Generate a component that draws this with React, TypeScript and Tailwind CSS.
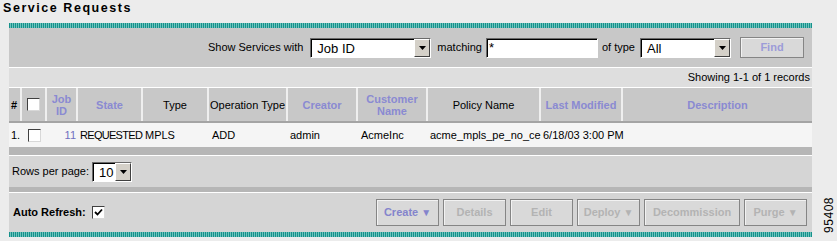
import React from "react";

const teal =
  "h-[5px] bg-[repeating-linear-gradient(90deg,#16918b_0px,#16918b_1px,#6fc3bd_1px,#6fc3bd_2px)]";

function Checkbox({ checked = false }: { checked?: boolean }) {
  return (
    <span className="inline-flex w-[13px] h-[13px] bg-white border border-t-[#404040] border-l-[#404040] border-b-[#d8d8d8] border-r-[#d8d8d8] items-center justify-center">
      {checked && (
        <svg width="9" height="9" viewBox="0 0 9 9">
          <path d="M1 4 L3.5 6.5 L8 1.5" stroke="#000" strokeWidth="1.8" fill="none" />
        </svg>
      )}
    </span>
  );
}

function Select({ value, width }: { value: string; width: string }) {
  return (
    <div
      className={`${width} h-[20px] bg-white flex items-stretch border border-t-[#6a6a6a] border-l-[#6a6a6a] border-b-white border-r-white`}
    >
      <div className="flex-1 flex items-center pl-[5px] text-[13px] leading-none border-t border-l border-t-black border-l-black">
        {value}
      </div>
      <div className="w-[16px] bg-[#d4d0c8] flex items-center justify-center border-t border-l border-t-white border-l-white border-b border-r border-b-[#404040] border-r-[#404040]">
        <svg width="7" height="4" viewBox="0 0 7 4">
          <path d="M0 0 H7 L3.5 4 Z" fill="#000" />
        </svg>
      </div>
    </div>
  );
}

function Btn({ label, width, active = false, arrow = false }: { label: string; width: string; active?: boolean; arrow?: boolean }) {
  return (
    <div
      className={`${width} h-[27px] bg-[#d9d9d9] border border-[#858585] shadow-[inset_1px_1px_0_#f2f2f2] flex items-center justify-center font-bold text-[11px] ${
        active ? "text-[#8484cc]" : "text-[#b3b3b3]"
      }`}
    >
      {label}
      {arrow && <span className="ml-[3px] text-[10px]">▼</span>}
    </div>
  );
}

const cols = [
  { w: "w-[13px]", label: "#", sort: false, align: "justify-start pl-[2px]" },
  { w: "w-[25px]", label: "cb", sort: false },
  { w: "w-[31px]", label: "Job\nID", sort: true },
  { w: "w-[65px]", label: "State", sort: true },
  { w: "w-[66px]", label: "Type", sort: false },
  { w: "w-[79px]", label: "Operation Type", sort: false },
  { w: "w-[70px]", label: "Creator", sort: true },
  { w: "w-[70px]", label: "Customer\nName", sort: true },
  { w: "w-[113px]", label: "Policy Name", sort: false },
  { w: "w-[82px]", label: "Last Modified", sort: true },
  { w: "flex-1", label: "Description", sort: true },
];

export default function App() {
  return (
    <div className="w-[837px] h-[241px] bg-[#ececec] flex font-['Liberation_Sans',Arial,sans-serif] text-[11px] text-black overflow-hidden">
      <div className="w-[812px] flex flex-col">
        <div className="h-[23px] pl-[3px] pt-[1px] text-[12.5px] font-bold tracking-[1.55px] leading-[14px]">
          Service Requests
        </div>
        <div className="ml-[9px] flex flex-col">
          <div className={teal} />
          <div className="h-[40px] bg-[#c8c8c8] flex items-center justify-end pr-[8px] border-b border-white">
            <span className="mr-[7px]">Show Services with</span>
            <Select value="Job ID" width="w-[121px]" />
            <span className="ml-[6px] mr-[4px]">matching</span>
            <div className="w-[112px] h-[20px] bg-white border border-t-[#6a6a6a] border-l-[#6a6a6a] border-b-white border-r-white">
              <div className="h-full border-t border-l border-t-black border-l-black pl-[1px] text-[13px] leading-[16px]">
                *
              </div>
            </div>
            <span className="ml-[4px] mr-[5px]">of type</span>
            <Select value="All" width="w-[91px]" />
            <div className="ml-[9px] w-[64px] h-[21px] bg-[#d9d9d9] border border-[#858585] shadow-[inset_1px_1px_0_#f2f2f2] flex items-center justify-center font-bold text-[#9c9cd8]">
              Find
            </div>
          </div>
          <div className="h-[19px] bg-[#dedede] flex items-center justify-end pr-[2px]">
            Showing 1-1 of 1 records
          </div>
          <div className="flex h-[36px] bg-[#c8c8c8] border-t border-white border-b-2 border-b-[#a4a4a4]">
            {cols.map((c, i) => (
              <div
                key={i}
                className={`${c.w} flex items-center ${c.align ?? "justify-center"} text-center leading-[12px] whitespace-pre-line ${
                  i < cols.length - 1 ? "border-r-2 border-[#efefef]" : ""
                } ${c.sort ? "font-bold text-[#8a8ad2]" : i === 0 ? "font-bold" : ""}`}
              >
                {c.label === "cb" ? <Checkbox /> : c.label}
              </div>
            ))}
          </div>
          <div className="flex h-[24px] bg-[#f5f5f5] items-center">
            <div className="w-[13px] pl-[2px]">1.</div>
            <div className="w-[25px] flex justify-center">
              <Checkbox />
            </div>
            <div className="w-[31px] text-right pr-[2px] text-[#7070c0]">11</div>
            <div className="w-[65px] pl-[2px] tracking-[-0.7px] whitespace-nowrap">REQUESTED</div>
            <div className="w-[66px] pl-[2px]">MPLS</div>
            <div className="w-[79px] pl-[3px]">ADD</div>
            <div className="w-[70px] pl-[2px]">admin</div>
            <div className="w-[70px] pl-[3px]">AcmeInc</div>
            <div className="w-[113px] pl-[2px] whitespace-nowrap">acme_mpls_pe_no_ce</div>
            <div className="w-[82px] pl-[2px] whitespace-nowrap">6/18/03 3:00 PM</div>
            <div className="flex-1" />
          </div>
          <div className="h-[8px] bg-[#b6b6b6]" />
          <div className="h-px bg-white" />
          <div className="h-[31px] bg-[#d5d5d5] flex items-center pl-[3px] gap-[3px]">
            <span>Rows per page:</span>
            <Select value="10" width="w-[40px]" />
          </div>
          <div className="h-[5px] bg-[#b6b6b6]" />
          <div className="h-px bg-white" />
          <div className="h-[39px] bg-[#d5d5d5] flex items-center pl-[4px] pr-[5px]">
            <span className="font-bold mr-[6px]">Auto Refresh:</span>
            <Checkbox checked />
            <div className="flex-1" />
            <div className="flex gap-[4px]">
              <Btn label="Create" width="w-[63px]" active arrow />
              <Btn label="Details" width="w-[63px]" />
              <Btn label="Edit" width="w-[63px]" />
              <Btn label="Deploy" width="w-[63px]" arrow />
              <Btn label="Decommission" width="w-[96px]" />
              <Btn label="Purge" width="w-[63px]" arrow />
            </div>
          </div>
          <div className={teal} />
        </div>
      </div>
      <div className="flex-1 flex flex-col justify-end items-center pb-[8px] pl-[8px]">
        <span className="[writing-mode:vertical-rl] rotate-180 text-[12px] leading-[12px] tracking-[0.5px]">
          95408
        </span>
      </div>
    </div>
  );
}
